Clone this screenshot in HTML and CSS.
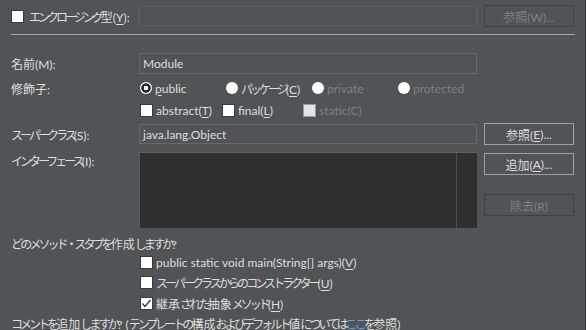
FILE: index.html
```html
<!DOCTYPE html>
<html lang="ja">
<head>
<meta charset="utf-8">
<link rel="stylesheet" href="styles.css">
</head>
<body>
<div class="dialog">
  <div class="row r1">
    <div class="label check-label"><span class="cb"></span><span><span class="k">エンクロージング</span>型(<u>Y</u>):</span></div>
    <div class="field disabled"></div>
    <div class="btn disabled">参照(W)...</div>
  </div>
  <div class="sep"></div>
  <div class="row r-name">
    <div class="label">名前(M):</div>
    <div class="field">Module</div>
  </div>
  <div class="row r-mod">
    <div class="label">修飾子:</div>
    <div class="opts">
      <span class="opt w86"><span class="radio sel"></span><span><u>p</u>ublic</span></span>
      <span class="opt w86"><span class="radio"></span><span><span class="k">パッケージ</span>(<u>C</u>)</span></span>
      <span class="opt w86 dis"><span class="radio"></span><span>private</span></span>
      <span class="opt dis"><span class="radio"></span><span>protected</span></span>
    </div>
  </div>
  <div class="row r-mod2">
    <div class="label"></div>
    <div class="opts">
      <span class="opt w82"><span class="cb"></span><span>abstract(<u>T</u>)</span></span>
      <span class="opt w81"><span class="cb"></span><span>final(<u>L</u>)</span></span>
      <span class="opt dis"><span class="cb cb-dis"></span><span>static(C)</span></span>
    </div>
  </div>
  <div class="row r-super">
    <div class="label"><span class="k">スーパークラス</span>(S):</div>
    <div class="field">java.lang.Object</div>
    <div class="btn">参照(<u>E</u>)...</div>
  </div>
  <div class="row r-if">
    <div class="label if-label"><span class="k">インターフェース</span>(I):</div>
    <div class="list"><div class="list-body"></div><div class="list-scroll"></div></div>
    <div class="btn-col">
      <div class="btn">追加(<u>A</u>)...</div>
      <div class="btn disabled">除去(R)</div>
    </div>
  </div>
  <div class="row r-q"><span><span class="h">どの</span><span class="k">メソッド・スタブ</span><span class="h">を</span>作成<span class="h">しますか</span>?</span></div>
  <div class="row r-cb a">
    <div class="label"></div>
    <span class="opt"><span class="cb"></span><span>public static void main(String[] args)(<u>V</u>)</span></span>
  </div>
  <div class="row r-cb b">
    <div class="label"></div>
    <span class="opt"><span class="cb"></span><span><span class="k">スーパークラス</span><span class="h">からの</span><span class="k">コンストラクター</span>(<u>U</u>)</span></span>
  </div>
  <div class="row r-cb c">
    <div class="label"></div>
    <span class="opt"><span class="cb checked"><svg viewBox="0 0 13 13" width="13" height="13"><path d="M2.5 6.5 L5 9.5 L10.5 3" fill="none" stroke="#333" stroke-width="1.3"/></svg></span><span>継承<span class="h">された</span>抽象<span class="k">メソッド</span>(<u>H</u>)</span></span>
  </div>
  <div class="row r-comment"><span><span class="k">コメント</span><span class="h">を</span>追加<span class="h">しますか</span>? (<span class="k">テンプレート</span><span class="h">の</span>構成<span class="h">および</span><span class="k">デフォルト</span>値<span class="h">については</span><span class="h link">ここ</span><span class="h">を</span>参照)</span></div>
</div>
</body>
</html>
```

FILE: styles.css
```css
html, body {
  margin: 0;
  padding: 0;
  height: 100%;
}
body {
  background: #505456;
  color: #dedede;
  font-family: Lato, "Noto Sans CJK JP", sans-serif;
  font-size: 12px;
  overflow: hidden;
}
.dialog {
  box-sizing: border-box;
  height: 330px;
  width: 586px;
  padding: 5px 0 0 11px;
  border-right: 1px solid #2c2f31;
}
.k { letter-spacing: -3px; }
.h { letter-spacing: -2.8px; }
u {
  text-decoration: underline;
  text-underline-offset: 2px;
}
.row {
  display: flex;
  align-items: center;
  white-space: nowrap;
}
.label {
  width: 128px;
  flex: none;
}
.check-label {
  display: flex;
  align-items: center;
  gap: 5px;
}
.field {
  box-sizing: border-box;
  width: 338px;
  height: 20px;
  border: 1px solid #65696b;
  padding: 0 3px;
  display: flex;
  align-items: center;
  flex: none;
}
.field.disabled {
  border-color: #5c6062;
}
.btn {
  box-sizing: border-box;
  margin-left: 7px;
  width: 90px;
  height: 22px;
  border: 1px solid #9da0a2;
  display: flex;
  align-items: center;
  justify-content: center;
  flex: none;
}
.btn.disabled {
  border-color: #3d4143;
  color: #7d8184;
}
.r1 { height: 22px; }
.sep {
  margin-top: 7px;
  width: 564px;
  height: 1px;
  background: #a3a5a6;
}
.r-name { margin-top: 18px; height: 21px; }
.r-name .field { height: 21px; }
.r-mod { margin-top: 5px; height: 18px; }
.r-mod2 { margin-top: 4px; height: 18px; }
.opts {
  display: flex;
  align-items: center;
  padding-left: 1px;
}
.opt {
  display: inline-flex;
  align-items: center;
  gap: 3px;
  flex: none;
}
.w86 { width: 86px; }
.w82 { width: 82px; }
.w81 { width: 81px; }
.opt.dis { color: #7d8184; }
.radio {
  width: 12px;
  height: 12px;
  border-radius: 50%;
  background: #fff;
  flex: none;
}
.radio.sel {
  background: radial-gradient(circle, #fff 0 2px, #262626 2.6px 4.4px, #fff 5px);
}
.cb {
  box-sizing: border-box;
  width: 13px;
  height: 13px;
  background: #fff;
  border: 1px solid #3a3a3a;
  flex: none;
  display: block;
}
.cb svg {
  display: block;
  margin: -1px;
}
.cb-dis {
  background: #e4e4e4;
  border-color: #9a9a9a;
}
.r-super { margin-top: 4px; height: 22px; }
.r-if {
  margin-top: 7px;
  height: 76px;
  align-items: flex-start;
}
.list {
  box-sizing: border-box;
  width: 338px;
  height: 76px;
  background: #2f2f2f;
  border-top: 1px solid #5f6365;
  border-left: 1px solid #5a5e60;
  display: flex;
  flex: none;
}
.list-body { flex: 1; }
.list-scroll {
  width: 20px;
  border-left: 1px solid #4b4f51;
}
.btn-col {
  display: flex;
  flex-direction: column;
  gap: 19px;
  padding-top: 1px;
}
.r-q { margin-top: 6px; height: 18px; }
.r-cb { height: 20px; }
.r-cb .opt { padding-left: 1px; gap: 3px; }
.r-cb.b { height: 21px; }
.r-comment { margin-top: 1px; height: 18px; }
.link { color: #5da9ec; }
```
